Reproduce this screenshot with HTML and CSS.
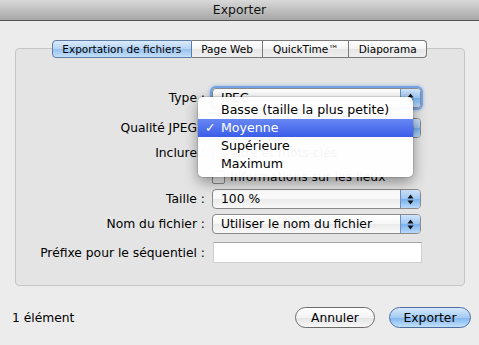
FILE: index.html
```html
<!DOCTYPE html>
<html lang="fr">
<head>
  <meta charset="UTF-8">
  <meta name="viewport" content="width=device-width, initial-scale=1.0">
  <title>Exporter</title>
  <link rel="stylesheet" href="styles.css">
</head>
<body>
<div class="titlebar">Exporter</div>

<div class="tabs">
  <span class="tab selected">Exportation de fichiers</span>
  <span class="tab">Page Web</span>
  <span class="tab">QuickTime™</span>
  <span class="tab">Diaporama</span>
</div>

<div class="panel">
  <div class="row">
    <span class="label">Type :</span>
    <div class="popup focused">
      <span class="value">JPEG</span>
      <span class="arrows"><svg width="7" height="11" viewBox="0 0 7 11"><polygon points="0.5,4.5 3.5,0.5 6.5,4.5"/><polygon points="0.5,6.5 3.5,10.5 6.5,6.5"/></svg></span>
    </div>
  </div>
  <div class="row row-quality">
    <span class="label">Qualité JPEG :</span>
    <div class="popup">
      <span class="value">Moyenne</span>
      <span class="arrows"><svg width="7" height="11" viewBox="0 0 7 11"><polygon points="0.5,4.5 3.5,0.5 6.5,4.5"/><polygon points="0.5,6.5 3.5,10.5 6.5,6.5"/></svg></span>
    </div>
  </div>
  <div class="row row-check">
    <span class="label">Inclure :</span>
    <span class="checkbox"></span>
    <span>Titre et mots-clés</span>
  </div>
  <div class="row row-check">
    <span class="label"></span>
    <span class="checkbox"></span>
    <span>Informations sur les lieux</span>
  </div>
  <div class="row row-size">
    <span class="label">Taille :</span>
    <div class="popup">
      <span class="value">100 %</span>
      <span class="arrows"><svg width="7" height="11" viewBox="0 0 7 11"><polygon points="0.5,4.5 3.5,0.5 6.5,4.5"/><polygon points="0.5,6.5 3.5,10.5 6.5,6.5"/></svg></span>
    </div>
  </div>
  <div class="row row-name">
    <span class="label">Nom du fichier :</span>
    <div class="popup">
      <span class="value">Utiliser le nom du fichier</span>
      <span class="arrows"><svg width="7" height="11" viewBox="0 0 7 11"><polygon points="0.5,4.5 3.5,0.5 6.5,4.5"/><polygon points="0.5,6.5 3.5,10.5 6.5,6.5"/></svg></span>
    </div>
  </div>
  <div class="row row-prefix">
    <span class="label">Préfixe pour le séquentiel :</span>
    <span class="field"></span>
  </div>

  <!-- open menu of the quality popup -->
  <div class="menu">
    <div class="item"><span class="mark"></span>Basse (taille la plus petite)</div>
    <div class="item active"><span class="mark">✓</span>Moyenne</div>
    <div class="item"><span class="mark"></span>Supérieure</div>
    <div class="item"><span class="mark"></span>Maximum</div>
  </div>
</div>

<div class="footer">
  <span>1 élément</span>
  <div class="buttons">
    <button class="btn cancel">Annuler</button>
    <button class="btn default">Exporter</button>
  </div>
</div>
</body>
</html>
```

FILE: styles.css
```css
body {
  margin: 0;
  background-color: #ececec;
  font-family: "DejaVu Sans", sans-serif;
  font-size: 12.3px;
  color: #000;
}
.titlebar {
  height: 20px;
  line-height: 20px;
  text-align: center;
  font-size: 12.4px;
  color: #111;
  background: linear-gradient(#d9d9d9, #a7a7a7);
  border-bottom: 1px solid #555;
}
.tabs {
  display: flex;
  justify-content: center;
  margin-top: 19px;
  margin-bottom: -10px;
  position: relative;
  z-index: 1;
}
.tab {
  height: 16px;
  line-height: 16px;
  padding: 0 9.5px;
  font-size: 10.5px;
  border: 1px solid #7a7a7a;
  border-left: none;
  background: linear-gradient(#ffffff, #f4f4f4 50%, #e6e6e6 51%, #efefef);
}
.tab:first-child {
  border-left: 1px solid #7a7a7a;
  border-radius: 4px 0 0 4px;
}
.tab:last-child {
  border-radius: 0 4px 4px 0;
}
.tab.selected {
  border-color: #5d7ea8;
  background: linear-gradient(#dbeafb, #b5d4f5 50%, #96c1ef 51%, #c5e0f9);
}
.panel {
  position: relative;
  margin: 0 14px 0 15px;
  padding: 39px 0 22px 0;
  border: 1px solid #c6c6c6;
  border-radius: 4px;
  background-color: #e4e4e4;
}
.row {
  display: flex;
  align-items: center;
  height: 20px;
}
.row-quality {
  margin-top: 10px;
}
.row-check {
  margin-top: 6px;
  height: 18px;
}
.row-size {
  margin-top: 3px;
}
.row-name {
  margin-top: 5px;
}
.row-prefix {
  margin-top: 8px;
  height: 21px;
}
.label {
  width: 189px;
  margin-right: 7px;
  text-align: right;
}
.popup {
  display: flex;
  align-items: center;
  box-sizing: border-box;
  width: 209px;
  height: 20px;
  border: 1px solid #8a8a8a;
  border-radius: 4px;
  background: linear-gradient(#ffffff, #f7f7f7 50%, #eaeaea 51%, #f9f9f9);
}
.popup.focused {
  box-shadow: 0 0 0 2px #73a1e2, 0 0 3px 3px rgba(115, 161, 226, 0.45);
}
.value {
  flex: 1;
  padding-left: 8px;
}
.arrows {
  align-self: stretch;
  width: 19px;
  display: flex;
  align-items: center;
  justify-content: center;
  border-left: 1px solid #6f8fbf;
  border-radius: 0 3px 3px 0;
  background: linear-gradient(#d2e5fb, #9cc6f1 50%, #79b0ec 51%, #b9dafa);
}
.arrows svg {
  fill: #111;
}
.checkbox {
  box-sizing: border-box;
  width: 13px;
  height: 13px;
  margin-right: 5px;
  border: 1px solid #8a8a8a;
  border-radius: 2px;
  background: linear-gradient(#ffffff, #e8e8e8);
}
.field {
  box-sizing: border-box;
  width: 209px;
  height: 21px;
  margin-left: 1px;
  border: 1px solid #cfcfcf;
  border-top-color: #a5a5a5;
  background-color: #fff;
}
.menu {
  position: absolute;
  left: 182px;
  top: 48px;
  width: 215px;
  padding: 4px 0;
  font-size: 12.6px;
  border-radius: 5px;
  background-color: rgba(255, 255, 255, 0.96);
  box-shadow: 0 5px 14px rgba(0, 0, 0, 0.4), 0 0 0 1px rgba(0, 0, 0, 0.1);
}
.item {
  display: flex;
  height: 18px;
  line-height: 18px;
}
.mark {
  width: 16px;
  margin-left: 7px;
}
.item.active {
  color: #fff;
  background: linear-gradient(#6787f3, #3b5de9);
}
.footer {
  display: flex;
  justify-content: space-between;
  align-items: center;
  padding: 21px 8px 0 12px;
}
.buttons {
  display: flex;
  gap: 14px;
}
.btn {
  height: 21px;
  padding: 0;
  font-family: "DejaVu Sans", sans-serif;
  font-size: 12.3px;
  color: #000;
  border: 1px solid #6c6c6c;
  border-radius: 11px;
  background: linear-gradient(#ffffff, #f3f3f3 50%, #e4e4e4 51%, #f6f6f6);
}
.cancel {
  width: 80px;
}
.default {
  width: 82px;
  border-color: #4f6f9f;
  background: linear-gradient(#d6e8fc, #a4cbf2 50%, #80b5ee 51%, #c2e0fb);
}
```
